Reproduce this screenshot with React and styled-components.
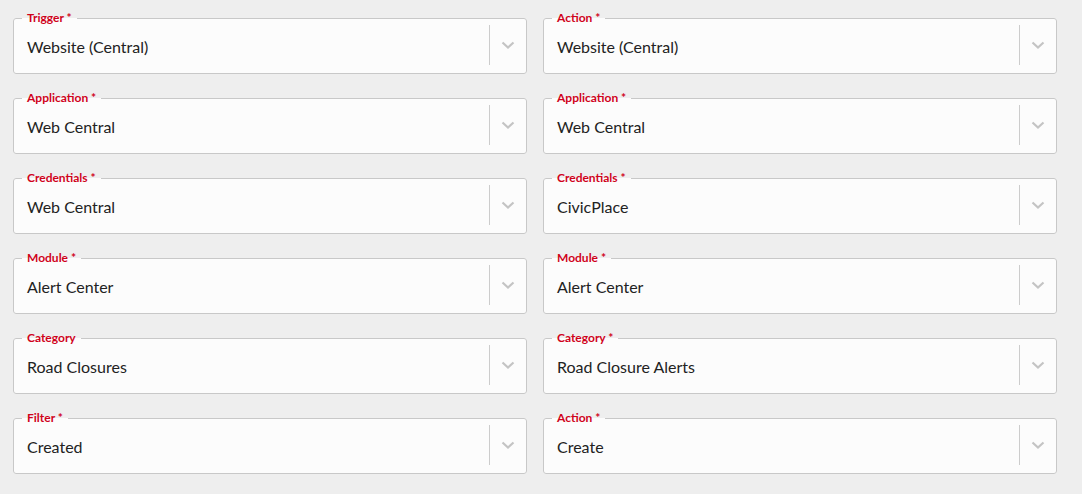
import styled, { createGlobalStyle } from 'styled-components';

const GlobalStyle = createGlobalStyle`
  html, body {
    margin: 0;
    padding: 0;
    background: #eeeeee;
    font-family: Lato, 'Open Sans', Arial, sans-serif;
  }
`;

const pairs = [
  [
    { label: 'Trigger', required: true, value: 'Website (Central)' },
    { label: 'Action', required: true, value: 'Website (Central)' },
  ],
  [
    { label: 'Application', required: true, value: 'Web Central' },
    { label: 'Application', required: true, value: 'Web Central' },
  ],
  [
    { label: 'Credentials', required: true, value: 'Web Central' },
    { label: 'Credentials', required: true, value: 'CivicPlace' },
  ],
  [
    { label: 'Module', required: true, value: 'Alert Center' },
    { label: 'Module', required: true, value: 'Alert Center' },
  ],
  [
    { label: 'Category', required: false, value: 'Road Closures' },
    { label: 'Category', required: true, value: 'Road Closure Alerts' },
  ],
  [
    { label: 'Filter', required: true, value: 'Created' },
    { label: 'Action', required: true, value: 'Create' },
  ],
];

const Chevron = () => (
  <svg width="14" height="8" viewBox="0 0 14 8">
    <polyline
      points="1.5,1.5 7,6.5 12.5,1.5"
      fill="none"
      stroke="#c4c4c4"
      strokeWidth="2.2"
    />
  </svg>
);

const SelectField = ({ label, required, value }) => (
  <Field>
    <Legend>
      {label}
      {required && ' *'}
    </Legend>
    <Control>
      <Value>{value}</Value>
      <Separator />
      <Indicator>
        <Chevron />
      </Indicator>
    </Control>
  </Field>
);

const App = () => (
  <>
    <GlobalStyle />
    <Form>
      {pairs.map((row, i) =>
        row.map((field, j) => <SelectField key={`${i}-${j}`} {...field} />)
      )}
    </Form>
  </>
);

const Form = styled.div`
  display: grid;
  grid-template-columns: 514px 514px;
  column-gap: 16px;
  row-gap: 17px;
  padding: 11px 0 0 13px;
`;

const Field = styled.fieldset`
  margin: 0;
  padding: 0 0 8px 0;
  min-width: 0;
  border: 1px solid #c8c8c8;
  border-radius: 3px;
  background: #fcfcfc;
`;

const Legend = styled.legend`
  margin-left: 8px;
  padding: 0 5px;
  font-size: 12px;
  line-height: 14px;
  font-weight: 700;
  color: #d0021b;
`;

const Control = styled.div`
  display: flex;
  align-items: center;
  height: 40px;
`;

const Value = styled.div`
  flex: 1;
  padding: 2px 0 0 13px;
  font-size: 16px;
  color: #222222;
  white-space: nowrap;
  overflow: hidden;
`;

const Separator = styled.span`
  align-self: stretch;
  width: 1px;
  background: #cccccc;
`;

const Indicator = styled.div`
  width: 36px;
  display: flex;
  justify-content: center;
  align-items: center;
`;

export default App;
